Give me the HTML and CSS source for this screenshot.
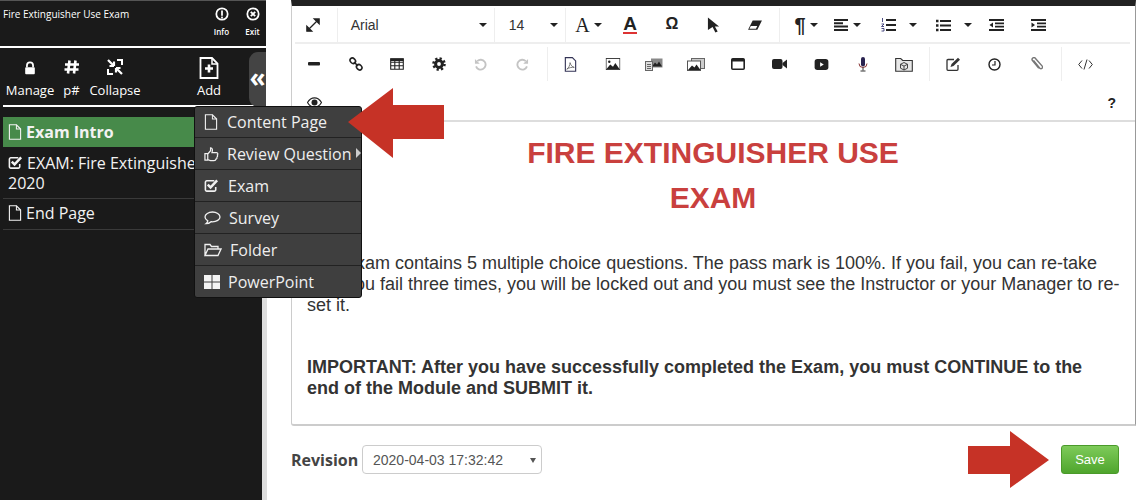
FILE: index.html
```html
<!DOCTYPE html>
<html>
	<head>
		<meta charset="UTF-8">
		<title>Fire Extinguisher Use Exam</title>
		<link rel="stylesheet" href="styles.css">
	</head>
	<body>
		<div class="sidebar">
			<div class="side_head">
				<div class="side_title">Fire Extinguisher Use Exam</div>
				<div class="head_btn">
					<svg viewBox="0 0 16 16" width="14" height="14"><circle cx="8" cy="8" r="6.500" fill="none" stroke="#fff" stroke-width="2"/><rect x="7" y="4" width="2" height="6" fill="#fff"/><rect x="7" y="11" width="2" height="2" fill="#fff"/></svg>
					<span>Info</span>
				</div>
				<div class="head_btn">
					<svg viewBox="0 0 16 16" width="14" height="14"><circle cx="8" cy="8" r="6.500" fill="none" stroke="#fff" stroke-width="2"/><path d="M5.500 5.500l5 5M10.500 5.500l-5 5" stroke="#fff" stroke-width="2.200"/></svg>
					<span>Exit</span>
				</div>
			</div>
			<div class="side_tools">
				<div class="tool tool_manage">
					<svg viewBox="0 0 16 16" width="14" height="14"><path d="M4.500 7V5a3.500 3.500 0 0 1 7 0v2" fill="none" stroke="#fff" stroke-width="2"/><rect x="2.500" y="7" width="11" height="8" rx="1" fill="#fff"/></svg>
					<span>Manage</span>
				</div>
				<div class="tool tool_num">
					<svg viewBox="0 0 16 16" width="16" height="16"><path d="M5.500 1.500L4 14.500M11.500 1.500L10 14.500M1 5.500h14M.5 10.500h14" stroke="#fff" stroke-width="2.600" fill="none"/></svg>
					<span>p#</span>
				</div>
				<div class="tool tool_collapse">
					<svg viewBox="0 0 16 16" width="16" height="16"><path d="M1 1l5 5M7 7H2.500M7 7V2.500M15 15l-5-5M9 9h4.500M9 9v4.500" stroke="#fff" stroke-width="2.200" fill="none"/><path d="M10 1h5v5M1 10v5h5" stroke="#fff" stroke-width="2" fill="none"/></svg>
					<span>Collapse</span>
				</div>
				<div class="tool tool_add">
					<svg viewBox="0 0 20 22" width="20" height="22"><path d="M1.500 1h11.500l5.500 5.500v14.500h-17z" fill="none" stroke="#fff" stroke-width="1.800"/><path d="M13 1v6h5.500" fill="none" stroke="#fff" stroke-width="1.500"/><path d="M10 7.500v8M6 11.500h8" stroke="#fff" stroke-width="2.600"/></svg>
					<span>Add</span>
				</div>
			</div>
			<ul class="page_list">
				<li class="active">
					<svg class="page_icon" viewBox="0 0 14 17" width="14" height="16"><use href="#i_file"/></svg>Exam Intro
				</li>
				<li>
					<svg class="page_icon check_icon" viewBox="0 0 16 16" width="15" height="15"><use href="#i_check"/></svg>EXAM: Fire Extinguisher Use 2020
				</li>
				<li>
					<svg class="page_icon" viewBox="0 0 14 17" width="14" height="16"><use href="#i_file"/></svg>End Page
				</li>
			</ul>
			<div class="collapse_tab">«</div>
			<div class="side_strip"></div>
		</div>

		<div class="main">
			<div class="editor">
				<div class="toolbar">
					<div class="tb_row tb_row1">
						<div class="tb_btn tb_expand"><svg viewBox="0 0 16 16" width="14" height="14"><path d="M9.500 1H15v5.500zM6.500 15H1V9.500zM12 4L4 12" fill="#222" stroke="#222" stroke-width="1.500"/></svg></div>
						<div class="tb_sep"></div>
						<div class="tb_select tb_font">Arial<i class="caret"></i></div>
						<div class="tb_select tb_size">14<i class="caret"></i></div>
						<div class="tb_btn tb_first"><span class="glyph_serif">A</span><i class="caret"></i></div>
						<div class="tb_btn"><span class="glyph_color">A</span></div>
						<div class="tb_btn"><span class="glyph_omega">Ω</span></div>
						<div class="tb_btn"><svg viewBox="0 0 14 16" width="13" height="16"><path d="M1 0l12 9.500H8.500l3 5.500-2.500 1-3-5.800L1 13.500z" fill="#222"/></svg></div>
						<div class="tb_btn"><svg viewBox="0 0 16 14" width="16" height="13"><path d="M5.500 1.500h10L10.500 11.500H.5z" fill="#222"/><path d="M3.500 7.500l-1.500 3h7l1.500-3z" fill="#fff"/></svg></div>
						<div class="tb_sep"></div>
						<div class="tb_btn tb_para"><span class="glyph_para">¶</span><i class="caret"></i></div>
						<div class="tb_btn"><svg viewBox="0 0 15 12" width="15" height="12"><path d="M0 1h14M0 4.300h9M0 7.600h14M0 11h14" stroke="#222" stroke-width="2"/></svg><i class="caret"></i></div>
						<div class="tb_btn tb_split tb_ol"><svg viewBox="0 0 15 14" width="15" height="14"><path d="M5 2h10M5 7h10M5 12h10" stroke="#222" stroke-width="2.200"/><path d="M1.500 0v4M.5 6h2.500l-2.500 2.500H3M.5 10.500H3V13H.5" stroke="#226" stroke-width=".8" fill="none"/></svg><i class="caret"></i></div>
						<div class="tb_btn tb_split tb_ul"><svg viewBox="0 0 15 13" width="15" height="13"><path d="M4 2h11M4 6.500h11M4 11h11" stroke="#222" stroke-width="2.200"/><path d="M0 2h2.500M0 6.500h2.500M0 11h2.500" stroke="#222" stroke-width="2.400"/></svg><i class="caret"></i></div>
						<div class="tb_btn tb_outdent"><svg viewBox="0 0 15 12" width="15" height="12"><path d="M0 1h15M6 4.300h9M6 7.600h9M0 11h15" stroke="#222" stroke-width="1.800"/><path d="M4 3.500v5L.5 6z" fill="#222"/></svg></div>
						<div class="tb_btn"><svg viewBox="0 0 15 12" width="15" height="12"><path d="M0 1h15M6 4.300h9M6 7.600h9M0 11h15" stroke="#222" stroke-width="1.800"/><path d="M.5 3.500v5L4 6z" fill="#222"/></svg></div>
					</div>
					<div class="tb_row tb_row2">
						<div class="tb_btn"><svg viewBox="0 0 12 4" width="12" height="4"><rect width="12" height="3.500" rx="1" fill="#222"/></svg></div>
						<div class="tb_btn"><svg viewBox="0 0 14 14" width="14" height="14"><ellipse cx="3.800" cy="3.800" rx="3" ry="2.400" transform="rotate(45 3.800 3.800)" fill="none" stroke="#222" stroke-width="1.600"/><ellipse cx="10.200" cy="10.200" rx="3" ry="2.400" transform="rotate(45 10.200 10.200)" fill="none" stroke="#222" stroke-width="1.600"/><path d="M5 5l4 4" stroke="#222" stroke-width="1.600"/></svg></div>
						<div class="tb_btn"><svg viewBox="0 0 14 12" width="14" height="12"><path d="M.7.700h12.600v10.600H.7zM.7 4.200h12.600M.7 7.700h12.600M4.800 2.500v8.800M9.200 2.500v8.800" fill="none" stroke="#222" stroke-width="1.100"/><rect x=".5" y=".5" width="13" height="2.500" fill="#222"/></svg></div>
						<div class="tb_btn"><svg viewBox="0 0 14 14" width="14" height="14"><circle cx="7" cy="7" r="3.400" fill="none" stroke="#222" stroke-width="3"/><circle cx="7" cy="7" r="5.500" fill="none" stroke="#222" stroke-width="2.600" stroke-dasharray="2.200 2.100"/></svg></div>
						<div class="tb_btn"><svg viewBox="0 0 14 14" width="13" height="13"><path d="M3.500 3.400A5.300 5.300 0 1 1 2.200 9" fill="none" stroke="#c4c4c4" stroke-width="2"/><path d="M1 1v5.200h5.200z" fill="#c4c4c4"/></svg></div>
						<div class="tb_btn"><svg viewBox="0 0 14 14" width="13" height="13"><path d="M10.500 3.400A5.300 5.300 0 1 0 11.800 9" fill="none" stroke="#c4c4c4" stroke-width="2"/><path d="M13 1v5.200H7.800z" fill="#c4c4c4"/></svg></div>
						<div class="tb_sep"></div>
						<div class="tb_btn"><svg viewBox="0 0 13 16" width="13" height="15"><path d="M1 .7h7.500L12 4.200v11H1z" fill="none" stroke="#335" stroke-width="1.200"/><path d="M2.500 13c2-1 3.500-4.500 3.500-7 .8 3 2.500 4.700 4.500 5-2-.2-5.500.2-8 2z" fill="none" stroke="#555" stroke-width=".8"/></svg></div>
						<div class="tb_btn"><svg viewBox="0 0 16 13" width="16" height="12"><use href="#i_image"/></svg></div>
						<div class="tb_btn"><svg viewBox="0 0 18 13" width="18" height="13"><rect x="6" y=".5" width="11.500" height="9" fill="#888"/><path d="M7 8.500l3-4 2 2 2-3 3 5z" fill="#222"/><rect x=".5" y="3.500" width="7" height="9" fill="#ddd" stroke="#666"/><path d="M2 6.500h4M2 8.500h4M2 10.500h4" stroke="#666"/></svg></div>
						<div class="tb_btn"><svg viewBox="0 0 18 13" width="18" height="13"><rect x="4.500" y=".5" width="13" height="10" fill="#ccc" stroke="#666"/><rect x=".5" y="3" width="13" height="9.500" fill="#fff" stroke="#555"/><path d="M1 12l4-4.500 2.500 2 2-3 4 5.500z" fill="#222"/></svg></div>
						<div class="tb_btn"><svg viewBox="0 0 14 12" width="14" height="12"><rect x=".8" y=".8" width="12.400" height="10.400" rx="1" fill="none" stroke="#222" stroke-width="1.600"/><rect x="1" y="1" width="12" height="2.500" fill="#222"/></svg></div>
						<div class="tb_btn"><svg viewBox="0 0 15 12" width="15" height="12"><rect y="1" width="10.500" height="10" rx="2" fill="#222"/><path d="M10.500 5L15 1.500v9L10.500 7z" fill="#222"/></svg></div>
						<div class="tb_btn"><svg viewBox="0 0 15 12" width="15" height="11"><rect width="15" height="12" rx="3" fill="#222"/><path d="M6 3.500v5L10 6z" fill="#fff"/></svg></div>
						<div class="tb_btn"><svg viewBox="0 0 10 15" width="10" height="15"><rect x="3" y="0" width="4" height="9.500" rx="2" fill="#2a2350"/><path d="M1 6.500a4 4 0 0 0 8 0" fill="none" stroke="#833" stroke-width="1"/><path d="M5 10.500v3M2.500 14h5" stroke="#333" stroke-width="1"/></svg></div>
						<div class="tb_btn"><svg viewBox="0 0 18 15" width="18" height="15"><path d="M.7 1.500h5l2 2h9.600v10.800H.7z" fill="#e8e8e8" stroke="#333" stroke-width="1.100"/><path d="M9 5.500l3.500 1.800v3.900L9 13l-3.500-1.800V7.300zM5.500 7.300L9 9.100l3.500-1.800M9 9.100V13" fill="none" stroke="#333" stroke-width=".9"/></svg></div>
						<div class="tb_sep"></div>
						<div class="tb_btn"><svg viewBox="0 0 15 14" width="15" height="14"><path d="M12 8v4.300a1 1 0 0 1-1 1H2a1 1 0 0 1-1-1V3.500a1 1 0 0 1 1-1h6" fill="none" stroke="#333" stroke-width="1.300"/><path d="M4.500 10l1-3L12 .8l2 2L7.500 9z" fill="#333"/></svg></div>
						<div class="tb_btn"><svg viewBox="0 0 13 13" width="13" height="13"><circle cx="6.500" cy="6.500" r="5.500" fill="none" stroke="#222" stroke-width="1.400"/><path d="M7 3v4H4" fill="none" stroke="#222" stroke-width="1.200"/></svg></div>
						<div class="tb_btn"><svg viewBox="0 0 12 14" width="12" height="14"><path d="M2.500 3.500l6.500 8a1.700 1.700 0 0 0 2.400-2.200L4.500 1.500a1.700 1.700 0 0 0-3.200 1.800l6.500 8" fill="none" stroke="#777" stroke-width="1.400"/></svg></div>
						<div class="tb_sep"></div>
						<div class="tb_btn"><svg viewBox="0 0 15 11" width="15" height="11"><path d="M4 1.500L.7 5.500 4 9.500M11 1.500l3.300 4-3.300 4M9 .5L6 10.500" fill="none" stroke="#333" stroke-width="1"/></svg></div>
					</div>
					<div class="tb_row3">
						<svg viewBox="0 0 15 11" width="15" height="11"><path d="M.5 5.500C2.500 2 5 .8 7.500.8s5 1.200 7 4.700c-2 3.500-4.500 4.700-7 4.700S2.500 9 .5 5.500z" fill="none" stroke="#222" stroke-width="1.200"/><circle cx="7.500" cy="5.500" r="3" fill="#222"/></svg>
						<span class="help">?</span>
					</div>
				</div>
				<div class="content">
					<h1>FIRE EXTINGUISHER USE<br>EXAM</h1>
					<p class="intro">This exam contains 5 multiple choice questions. The pass mark is 100%. If you fail, you can re-take<br>it.&nbsp; If you fail three times, you will be locked out and you must see the Instructor or your Manager to re-set it.</p>
					<p class="notice">IMPORTANT: After you have successfully completed the Exam, you must CONTINUE to the<br>end of the Module and SUBMIT it.</p>
				</div>
			</div>
			<div class="footer">
				<label class="rev_label">Revision</label>
				<div class="rev_select">2020-04-03 17:32:42<i></i></div>
				<div class="save_btn">Save</div>
			</div>
		</div>

		<ul class="add_menu">
			<li><svg viewBox="0 0 14 17" width="14" height="16"><use href="#i_file"/></svg><span>Content Page</span></li>
			<li><svg viewBox="0 0 16 16" width="15" height="16"><path d="M1 7.500h3v7H1zM4 8l3-3.500V1.500c2 0 2.500 2 1.500 5h5c1.500 0 1.500 2 .7 2.500.6.800.4 2-.4 2.400.3 1-.3 2-1.100 2.100-.1 1-1 1.500-2 1.500H7c-1.500 0-2-1-3-1" fill="none" stroke="#f0f0f0" stroke-width="1.300"/></svg><span class="tight">Review Question</span><i class="sub_caret"></i></li>
			<li><svg viewBox="0 0 16 16" width="15" height="15"><use href="#i_check"/></svg><span>Exam</span></li>
			<li><svg viewBox="0 0 17 14" width="17" height="14"><path d="M8.500 1C4.500 1 1 3.200 1 6c0 1.700 1.200 3 2.800 3.900-.2 1-.8 2-1.800 2.800 2 0 3.800-.8 5-2 .5 0 1 .1 1.500.1 4 0 7.500-2.100 7.500-4.800S12.500 1 8.500 1z" fill="none" stroke="#f0f0f0" stroke-width="1.300"/></svg><span class="tight">Survey</span></li>
			<li><svg viewBox="0 0 18 14" width="18" height="14"><path d="M1 12.500V1.500h5l1.500 2H14v2.500M1 12.500L4 6h13l-3 6.500z" fill="none" stroke="#f0f0f0" stroke-width="1.300"/></svg><span class="tight">Folder</span></li>
			<li><svg viewBox="0 0 16 14" width="16" height="14"><rect width="7.500" height="6.500" fill="#f4f4f4"/><rect x="8.500" width="7.500" height="6.500" fill="#f4f4f4"/><rect y="7.500" width="7.500" height="6.500" fill="#f4f4f4"/><rect x="8.500" y="7.500" width="7.500" height="6.500" fill="#f4f4f4"/></svg><span class="tight">PowerPoint</span></li>
		</ul>

		<svg class="arrow arrow_left" viewBox="0 0 96 70" width="96" height="70"><path d="M0 34L45 0v17h51v34H45v19z" fill="#c63226"/></svg>
		<svg class="arrow arrow_right" viewBox="0 0 81 57" width="81" height="57"><path d="M0 15h42V0l39 29-39 28V43H0z" fill="#c63226"/></svg>

		<svg class="defs" width="0" height="0">
			<symbol id="i_file" viewBox="0 0 14 17"><path d="M1 .8h7.500L13 5.300v10.900H1z" fill="none" stroke="currentColor" stroke-width="1.300"/><path d="M8.500 .8v4.500H13" fill="none" stroke="currentColor" stroke-width="1.100"/></symbol>
			<symbol id="i_check" viewBox="0 0 16 16"><path d="M12.500 9.500v3a1.500 1.500 0 0 1-1.500 1.500H3a1.500 1.500 0 0 1-1.500-1.500V4.500A1.500 1.500 0 0 1 3 3h8" fill="none" stroke="currentColor" stroke-width="1.700"/><path d="M4 7l3 3 7-7.500" fill="none" stroke="currentColor" stroke-width="2.600"/></symbol>
			<symbol id="i_image" viewBox="0 0 16 13"><rect x=".5" y=".5" width="15" height="12" fill="#fff" stroke="#333"/><path d="M1 12l4-5 3 2.500 2.500-4L15 12z" fill="#222"/><circle cx="4" cy="4" r="1.300" fill="#222"/></symbol>
		</svg>
	</body>
</html>
```

FILE: styles.css
```css
*{
	margin: 0px;
	padding: 0px;
	box-sizing: border-box;
}
html, body{
	height: 500px;
	overflow: hidden;
}
body{
	position: relative;
	display: flex;
	background: #fff;
	font-family: "Open Sans", "Liberation Sans", sans-serif;
	color: #fff;
}
ul{
	list-style: none;
}
.defs{
	position: absolute;
}

/* left panel */
.sidebar{
	position: relative;
	width: 266px;
	height: 500px;
	padding-left: 3px;
	background: #1a1a1a;
	border-top: 1px solid #555;
	flex: none;
}
.side_strip{
	position: absolute;
	top: 105px;
	right: -1px;
	bottom: 0;
	width: 5px;
	background: #ddd;
}
.side_head{
	display: flex;
	height: 47px;
	margin-left: -3px;
	margin-right: -2px;
	padding: 6px 0 0 3px;
	border-bottom: 2px solid #fff;
}
.side_title{
	flex: 1;
	font-size: 10px;
	line-height: 14px;
}
.head_btn{
	width: 31px;
	display: flex;
	flex-direction: column;
	align-items: center;
	font-size: 8px;
	font-weight: 600;
}
.head_btn span{
	margin-top: 5px;
	line-height: 11px;
}
.side_tools{
	display: flex;
	height: 59px;
	width: 259px;
	border-bottom: 2px solid #fff;
	font-size: 13px;
}
.tool{
	display: flex;
	flex-direction: column;
	align-items: center;
	justify-content: flex-end;
	padding-bottom: 6px;
}
.tool span{
	line-height: 18px;
}
.tool svg{
	margin-bottom: 6px;
}
.tool_manage{
	width: 54px;
}
.tool_num{
	width: 29px;
}
.tool_collapse{
	width: 58px;
}
.tool_add{
	width: 48px;
	margin-left: 41px;
}
.tool_add svg{
	margin-bottom: 2px;
}
.page_list{
	margin-top: 10px;
	width: 259px;
	font-size: 16px;
	line-height: 21px;
	color: #f2f2f2;
}
.page_list li{
	padding: 4px 0 5px 5px;
	border-bottom: 1px solid #3a3a3a;
}
.page_list li.active{
	height: 30px;
	padding: 5px 0 0 5px;
	background: #478a4a;
	font-weight: bold;
	border-bottom: none;
}
.page_list li:nth-child(2){
	padding-top: 6px;
	line-height: 20px;
}
.page_icon{
	margin-right: 4px;
	vertical-align: -2px;
}
.check_icon{
	margin-right: 4px;
	vertical-align: -1px;
}
.collapse_tab{
	position: absolute;
	top: 51px;
	right: 0;
	width: 17px;
	height: 55px;
	background: #444;
	border-radius: 9px 0 0 9px;
	font-size: 26px;
	font-weight: bold;
	line-height: 50px;
	text-align: center;
	overflow: hidden;
}

/* add menu */
.add_menu{
	position: absolute;
	left: 194px;
	top: 106px;
	width: 168px;
	height: 192px;
	background: #3f3f3f;
	border: 1px solid #111;
	border-radius: 3px;
	font-size: 16px;
	color: #eee;
}
.add_menu li{
	position: relative;
	display: flex;
	align-items: center;
	height: 32px;
	padding-left: 9px;
	border-bottom: 1px solid #222;
}
.add_menu li:first-child{
	height: 31px;
}
.add_menu li:last-child{
	border-bottom: none;
}
.add_menu svg{
	flex: none;
	color: #f0f0f0;
}
.add_menu span{
	margin-left: 9px;
}
.add_menu span.tight{
	margin-left: 8px;
}
.sub_caret{
	position: absolute;
	right: 0;
	top: 10px;
	border-left: 5px solid #ccc;
	border-top: 5px solid transparent;
	border-bottom: 5px solid transparent;
}

/* overlay arrows */
.arrow{
	position: absolute;
}
.arrow_left{
	left: 348px;
	top: 88px;
}
.arrow_right{
	left: 968px;
	top: 431px;
}

/* right side */
.main{
	flex: 1;
	padding-left: 25px;
	color: #333;
	font-family: "Liberation Sans", sans-serif;
	min-width: 0;
}
.editor{
	height: 426px;
	background: #fff;
	border-top: 6px solid #222;
	border-left: 1px solid #ccc;
	border-right: 1px solid #999;
	border-bottom: 2px solid #ccc;
	border-radius: 0 0 0 3px;
}
.toolbar{
	height: 116px;
	border-bottom: 2px solid #ddd;
	position: relative;
}
.tb_row{
	display: flex;
	align-items: center;
}
.tb_row1{
	height: 38px;
	margin: 0 5px 0 3px;
	padding-top: 2px;
	border-bottom: 2px solid #eee;
}
.tb_row2{
	height: 37px;
	padding-left: 1px;
	padding-top: 3px;
}
.tb_btn{
	width: 41.700px;
	height: 34px;
	flex: none;
	display: flex;
	align-items: center;
	justify-content: center;
	color: #222;
}
.tb_expand{
	margin-left: -3px;
}
.tb_sep{
	width: 1px;
	height: 34px;
	flex: none;
	margin: 0 2px 0 4px;
	background: #eee;
}
.tb_row1 .tb_sep{
	margin: 0 0 0 3px;
}
.tb_select{
	height: 34px;
	flex: none;
	display: flex;
	align-items: center;
	padding-left: 13px;
	font-size: 14px;
	color: #333;
	border-right: 1px solid #eee;
}
.tb_font{
	width: 157px;
}
.tb_size{
	width: 71px;
	padding-left: 14px;
}
.tb_select .caret{
	margin-left: auto;
	margin-right: 7px;
}
.caret{
	margin-left: 4px;
	border-top: 4px solid #222;
	border-left: 4px solid transparent;
	border-right: 4px solid transparent;
}
.tb_split .caret{
	margin-left: 13px;
}
.tb_first{
	margin-left: 2px;
}
.tb_para{
	margin-left: 5px;
}
.tb_ol{
	margin-left: 10px;
}
.tb_ul{
	margin-left: 13px;
}
.tb_outdent{
	margin-left: 1px;
}
.glyph_serif{
	font-family: "Liberation Serif", serif;
	font-size: 20px;
}
.glyph_color{
	font-size: 19px;
	font-weight: bold;
	line-height: 16px;
	border-bottom: 2px solid #d33;
}
.glyph_omega{
	margin-top: -3px;
	font-size: 16px;
	font-weight: bold;
}
.glyph_para{
	font-size: 20px;
	font-weight: bold;
}
.tb_row3{
	display: flex;
	align-items: center;
	justify-content: space-between;
	height: 39px;
	padding: 4px 19px 0 15px;
}
.help{
	font-size: 14px;
	font-weight: bold;
	color: #222;
}
.content{
	padding: 8px 6px 0 15px;
}
.content h1{
	padding-right: 10px;
	font-size: 30px;
	line-height: 45px;
	color: #c9403e;
	text-align: center;
}
.intro, .notice{
	font-size: 18px;
	line-height: 21px;
}
.intro{
	margin-top: 33px;
}
.notice{
	margin-top: 41px;
	font-weight: bold;
}
.footer{
	display: flex;
	align-items: center;
	height: 29px;
	margin-top: 19px;
	padding-right: 17px;
}
.rev_label{
	width: 71px;
	font-family: "Open Sans", sans-serif;
	font-size: 16px;
	font-weight: bold;
	color: #444;
}
.rev_select{
	position: relative;
	width: 180px;
	height: 29px;
	padding-left: 10px;
	border: 1px solid #ccc;
	border-radius: 4px;
	font-size: 14px;
	line-height: 28px;
	color: #555;
}
.rev_select i{
	position: absolute;
	right: 5px;
	top: 12px;
	border-top: 5px solid #555;
	border-left: 3px solid transparent;
	border-right: 3px solid transparent;
}
.save_btn{
	width: 58px;
	height: 29px;
	margin-left: auto;
	background: linear-gradient(#7ecb5a, #4fa52d);
	border: 1px solid #4a9a2a;
	border-radius: 3px;
	font-size: 13px;
	line-height: 27px;
	text-align: center;
	color: #fff;
}
```
